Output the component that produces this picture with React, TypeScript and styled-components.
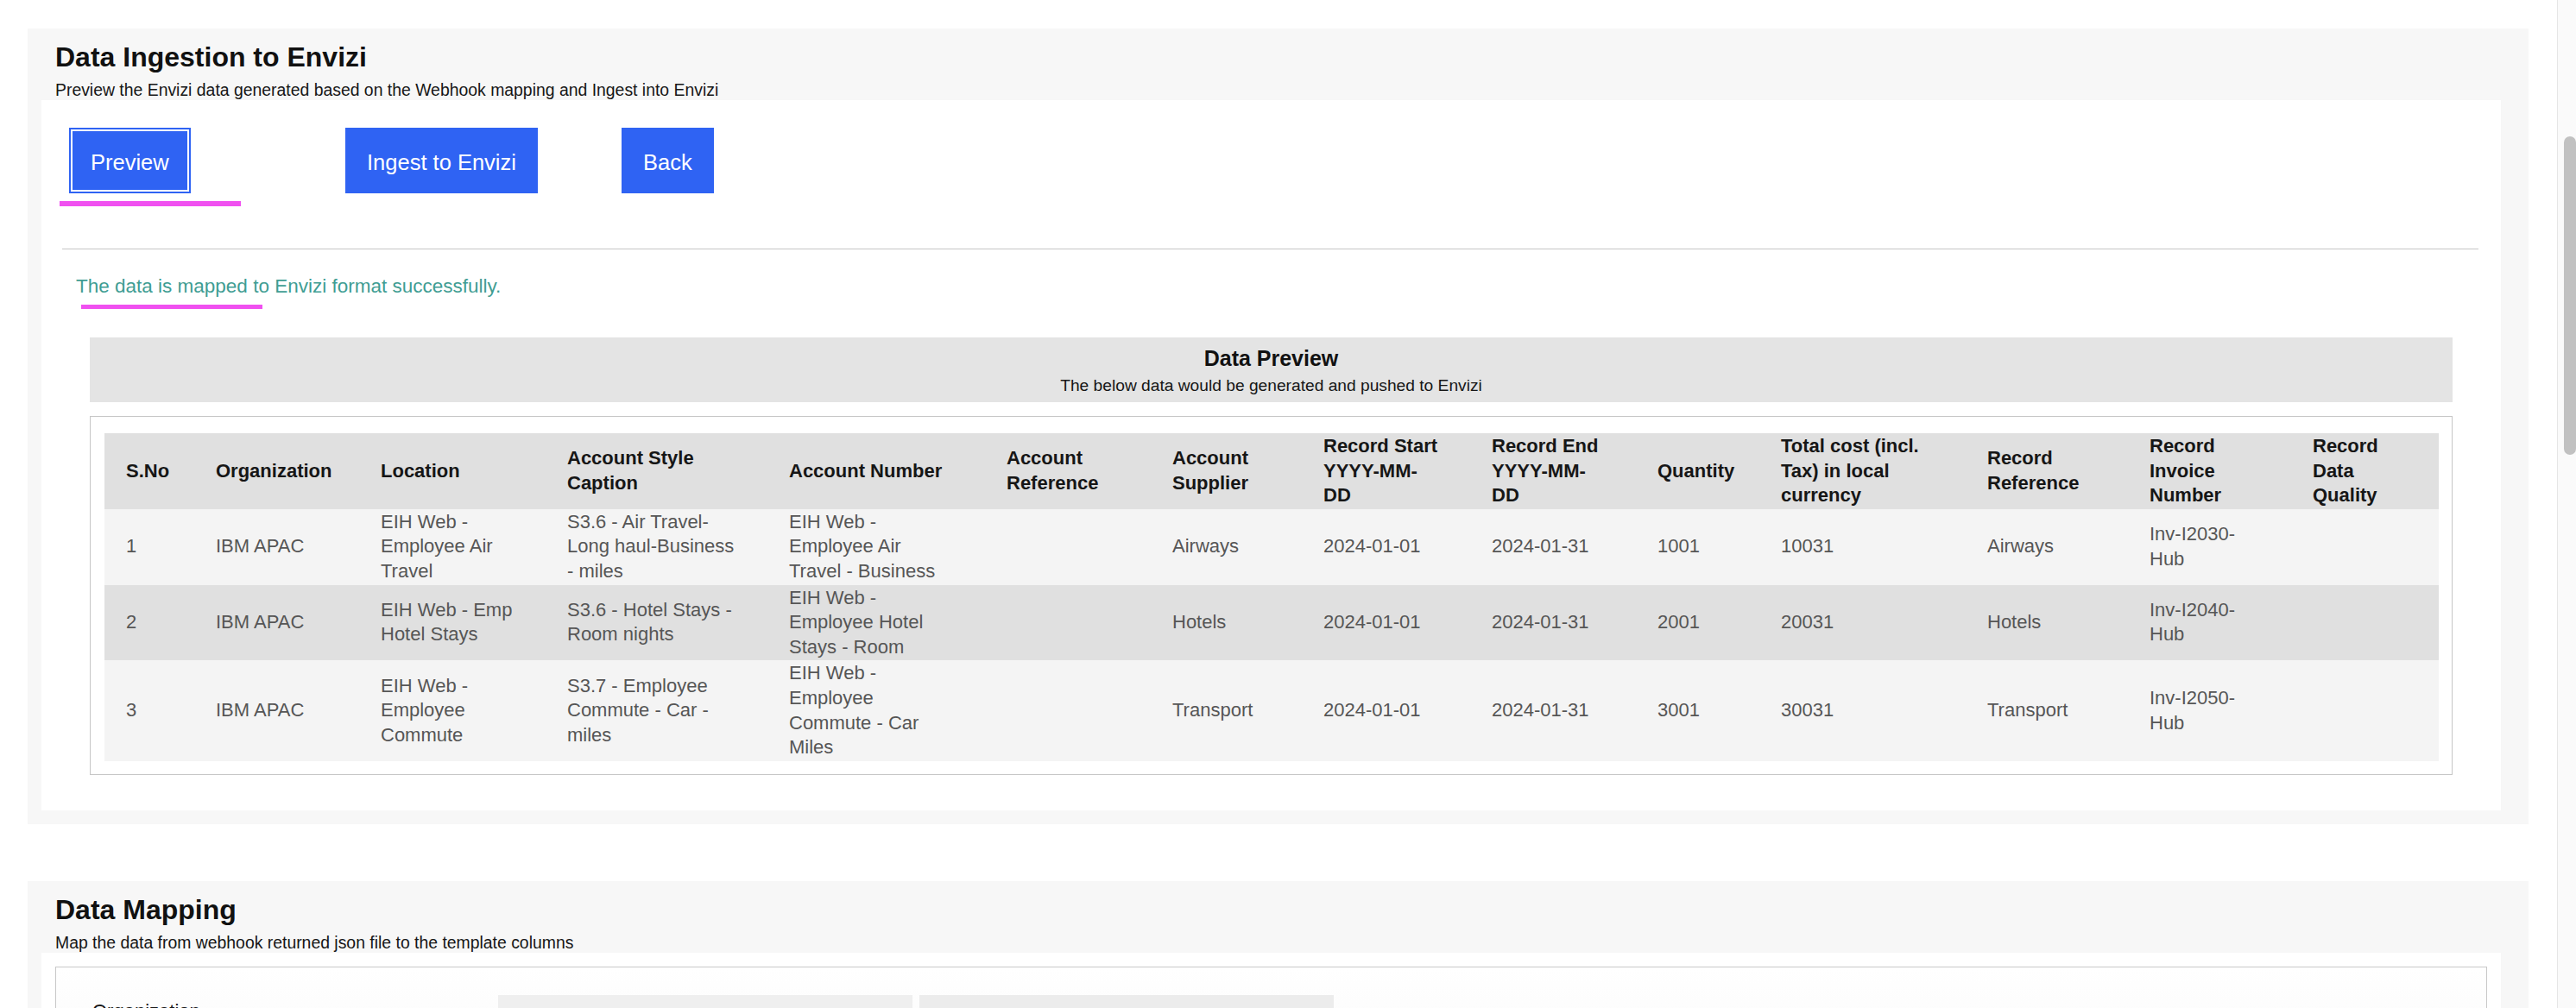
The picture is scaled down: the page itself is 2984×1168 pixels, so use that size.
import styled, { createGlobalStyle } from "styled-components";

const GlobalStyle = createGlobalStyle`
  * { box-sizing: border-box; }
  html, body {
    margin: 0;
    padding: 0;
    height: 1168px;
    overflow: hidden;
    background: #ffffff;
  }
  body {
    font-family: "Liberation Sans", Arial, sans-serif;
    color: #161616;
  }
`;

type Column = { label: string; width?: number };

const columns: Column[] = [
  { label: "S.No", width: 104 },
  { label: "Organization", width: 191 },
  { label: "Location", width: 216 },
  { label: "Account Style\nCaption", width: 257 },
  { label: "Account Number", width: 252 },
  { label: "Account\nReference", width: 192 },
  { label: "Account\nSupplier", width: 175 },
  { label: "Record Start\nYYYY-MM-\nDD", width: 195 },
  { label: "Record End\nYYYY-MM-\nDD", width: 192 },
  { label: "Quantity", width: 143 },
  { label: "Total cost (incl.\nTax) in local\ncurrency", width: 239 },
  { label: "Record\nReference", width: 188 },
  { label: "Record\nInvoice\nNumber", width: 189 },
  { label: "Record\nData\nQuality" },
];

const rows: string[][] = [
  [
    "1",
    "IBM APAC",
    "EIH Web -\nEmployee Air\nTravel",
    "S3.6 - Air Travel-\nLong haul-Business\n- miles",
    "EIH Web -\nEmployee Air\nTravel - Business",
    "",
    "Airways",
    "2024-01-01",
    "2024-01-31",
    "1001",
    "10031",
    "Airways",
    "Inv-I2030-\nHub",
    "",
  ],
  [
    "2",
    "IBM APAC",
    "EIH Web - Emp\nHotel Stays",
    "S3.6 - Hotel Stays -\nRoom nights",
    "EIH Web -\nEmployee Hotel\nStays - Room",
    "",
    "Hotels",
    "2024-01-01",
    "2024-01-31",
    "2001",
    "20031",
    "Hotels",
    "Inv-I2040-\nHub",
    "",
  ],
  [
    "3",
    "IBM APAC",
    "EIH Web -\nEmployee\nCommute",
    "S3.7 - Employee\nCommute - Car -\nmiles",
    "EIH Web -\nEmployee\nCommute - Car\nMiles",
    "",
    "Transport",
    "2024-01-01",
    "2024-01-31",
    "3001",
    "30031",
    "Transport",
    "Inv-I2050-\nHub",
    "",
  ],
];

const mappingRows = ["Organization", "Location", "Account Style Caption"];

const Shell = styled.div`
  display: flex;
  height: 1168px;
  overflow: hidden;
`;

const Main = styled.main`
  flex: 1;
  min-width: 0;
  padding: 33px 33px 0 32px;
  display: flex;
  flex-direction: column;
  gap: 66px;
`;

const ScrollTrack = styled.div`
  width: 22px;
  flex-shrink: 0;
  border-left: 1px solid #e6e6e6;
  background: #fafafa;
  padding: 158px 0 0 7px;
`;

const ScrollThumb = styled.div`
  width: 14px;
  height: 369px;
  border-radius: 7px;
  background: #c1c1c1;
`;

const Section = styled.section`
  flex-shrink: 0;
  background: #f7f7f7;
  padding: 13px 32px 16px 16px;
`;

const SectionHeader = styled.header`
  padding-left: 16px;
`;

const Title = styled.h2`
  margin: 0;
  font-size: 32px;
  line-height: 40px;
  font-weight: 700;
  color: #111111;
`;

const Subtitle = styled.p`
  margin: 6px 0 0;
  font-size: 19.4px;
  line-height: 24px;
  color: #161616;
`;

const Panel = styled.div<{ $pad: string }>`
  background: #ffffff;
  padding: ${({ $pad }) => $pad};
`;

const ButtonRow = styled.div`
  display: grid;
  grid-template-columns: repeat(3, 320px);
  justify-items: start;
  padding-left: 32px;
`;

const ButtonSlot = styled.div`
  position: relative;
`;

const ActionButton = styled.button<{ $focused?: boolean }>`
  height: 76px;
  padding: 5px 25px 0;
  border: none;
  background: #2f63f3;
  color: #ffffff;
  font-family: "Liberation Sans", Arial, sans-serif;
  font-size: 25.5px;
  display: flex;
  align-items: center;
  cursor: pointer;
  box-shadow: ${({ $focused }) =>
    $focused ? "inset 0 0 0 2px #2f63f3, inset 0 0 0 4px #ffffff" : "none"};
`;

const Mark = styled.span<{ $top: number; $left: number; $height: number }>`
  position: absolute;
  top: ${({ $top }) => $top}px;
  left: ${({ $left }) => $left}px;
  width: 210px;
  height: ${({ $height }) => $height}px;
  background: #f050f0;
`;

const Divider = styled.hr`
  margin: 64px 26px 0 24px;
  border: 0;
  border-top: 1px solid #c6c6c6;
`;

const SuccessMessage = styled.p`
  position: relative;
  margin: 28px 0 0 40px;
  font-size: 22.5px;
  line-height: 30px;
  color: #3f9d93;
`;

const PreviewHeader = styled.div`
  margin: 44px 56px 0;
  padding: 9px 0 7px;
  background: #e4e4e4;
  text-align: center;
`;

const PreviewTitle = styled.h3`
  margin: 0 0 5px;
  font-size: 25px;
  line-height: 30px;
  font-weight: 700;
  color: #111111;
`;

const PreviewNote = styled.div`
  font-size: 19.2px;
  line-height: 24px;
  color: #161616;
`;

const TableFrame = styled.div`
  margin: 16px 56px 0;
  border: 1px solid #c6c6c6;
  padding: 19px 15px 15px 16px;
`;

const Table = styled.table`
  width: 100%;
  border-collapse: collapse;
  table-layout: fixed;
`;

const HeadCell = styled.th`
  padding: 1px 8px 1px 25px;
  background: #e0e0e0;
  text-align: left;
  vertical-align: middle;
  white-space: pre-line;
  font-size: 22px;
  line-height: 28.6px;
  font-weight: 700;
  color: #161616;
`;

const BodyRow = styled.tr<{ $shade: boolean }>`
  background: ${({ $shade }) => ($shade ? "#e0e0e0" : "#f4f4f4")};
`;

const BodyCell = styled.td`
  padding: 1px 8px 1px 25px;
  vertical-align: middle;
  white-space: pre-line;
  font-size: 22px;
  line-height: 28.6px;
  color: #565656;
`;

const MappingBox = styled.div`
  height: 240px;
  border: 1px solid #c8c8c8;
  background: linear-gradient(180deg, #ffffff 0%, #f3f3f3 100%);
  padding: 32px 0 0 42px;
  display: flex;
  flex-direction: column;
  gap: 24px;
`;

const MappingRow = styled.div`
  display: grid;
  grid-template-columns: 462px 480px 480px;
  column-gap: 8px;
  align-items: start;
`;

const MappingLabel = styled.div`
  padding-top: 5px;
  font-size: 22px;
  line-height: 28.6px;
  color: #161616;
`;

const MappingField = styled.div<{ $tone: string }>`
  height: 48px;
  background: ${({ $tone }) => $tone};
`;

export default function App() {
  return (
    <>
      <GlobalStyle />
      <Shell>
        <Main>
          <Section>
            <SectionHeader>
              <Title>Data Ingestion to Envizi</Title>
              <Subtitle>
                Preview the Envizi data generated based on the Webhook mapping
                and Ingest into Envizi
              </Subtitle>
            </SectionHeader>
            <Panel $pad="32px 0 41px">
              <ButtonRow>
                <ButtonSlot>
                  <ActionButton $focused>Preview</ActionButton>
                  <Mark $top={85} $left={-11} $height={6} />
                </ButtonSlot>
                <ButtonSlot>
                  <ActionButton>Ingest to Envizi</ActionButton>
                </ButtonSlot>
                <ButtonSlot>
                  <ActionButton>Back</ActionButton>
                </ButtonSlot>
              </ButtonRow>

              <Divider />

              <SuccessMessage>
                The data is mapped to Envizi format successfully.
                <Mark $top={36} $left={6} $height={5} />
              </SuccessMessage>

              <PreviewHeader>
                <PreviewTitle>Data Preview</PreviewTitle>
                <PreviewNote>
                  The below data would be generated and pushed to Envizi
                </PreviewNote>
              </PreviewHeader>

              <TableFrame>
                <Table>
                  <colgroup>
                    {columns.map((c) => (
                      <col
                        key={c.label}
                        style={c.width ? { width: c.width } : undefined}
                      />
                    ))}
                  </colgroup>
                  <thead>
                    <tr>
                      {columns.map((c) => (
                        <HeadCell key={c.label}>{c.label}</HeadCell>
                      ))}
                    </tr>
                  </thead>
                  <tbody>
                    {rows.map((row, i) => (
                      <BodyRow key={row[0]} $shade={i % 2 === 1}>
                        {row.map((value, j) => (
                          <BodyCell key={j}>{value}</BodyCell>
                        ))}
                      </BodyRow>
                    ))}
                  </tbody>
                </Table>
              </TableFrame>
            </Panel>
          </Section>

          <Section>
            <SectionHeader>
              <Title>Data Mapping</Title>
              <Subtitle>
                Map the data from webhook returned json file to the template
                columns
              </Subtitle>
            </SectionHeader>
            <Panel $pad="16px 16px 0">
              <MappingBox>
                {mappingRows.map((label) => (
                  <MappingRow key={label}>
                    <MappingLabel>{label}</MappingLabel>
                    <MappingField $tone="#efefef" />
                    <MappingField $tone="#ececec" />
                  </MappingRow>
                ))}
              </MappingBox>
            </Panel>
          </Section>
        </Main>
        <ScrollTrack>
          <ScrollThumb />
        </ScrollTrack>
      </Shell>
    </>
  );
}
